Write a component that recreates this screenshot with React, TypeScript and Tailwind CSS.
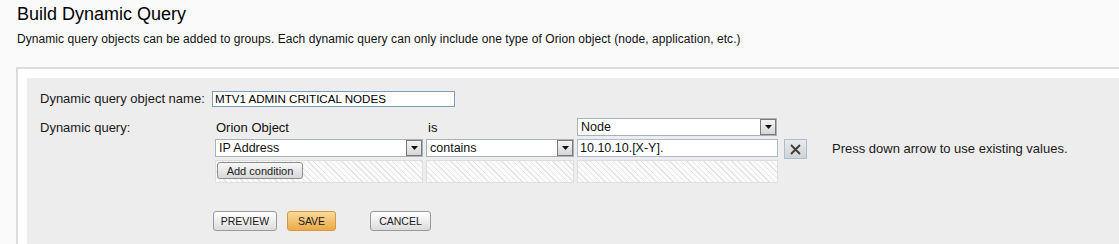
const DropArrow = () => (
  <span className="flex h-full w-[16px] shrink-0 items-center justify-center border border-[#7a7a7a] bg-[linear-gradient(#f4f4f4,#d6d6d6)]">
    <svg width="7" height="4" viewBox="0 0 7 4">
      <path d="M0 0h7L3.5 4z" fill="#111" />
    </svg>
  </span>
);

const Select = ({ value, className }: { value: string; className: string }) => (
  <div className={`flex h-[18px] items-center border border-[#a9b1bd] bg-white pl-[3px] ${className}`}>
    <span className="flex-1 truncate text-[12.5px] leading-[16px] text-[#111]">{value}</span>
    <DropArrow />
  </div>
);

const Hatch = ({ className, children }: { className: string; children?: React.ReactNode }) => (
  <div
    className={`h-[23px] border border-[#dedede] bg-[repeating-linear-gradient(45deg,#fbfbfb_0px,#fbfbfb_3px,#e4e4e4_3px,#e4e4e4_4px)] ${className}`}
  >
    {children}
  </div>
);

const Btn = ({ label, primary, className }: { label: string; primary?: boolean; className: string }) => (
  <button
    className={`flex h-[20px] items-center justify-center rounded-[3px] border text-[10.5px] leading-[12px] text-[#1a1a1a] ${
      primary
        ? 'border-[#d39b3c] bg-[linear-gradient(#fbd99b,#eaaa48)]'
        : 'border-[#9a9a9a] bg-[linear-gradient(#ffffff,#dcdcdc)]'
    } ${className}`}
  >
    {label}
  </button>
);

export default function App() {
  return (
    <div className="h-[244px] w-[1119px] overflow-hidden bg-[#fafafa] font-['Liberation_Sans',Arial,sans-serif] text-[#111]">
      {/* Header */}
      <div className="pl-[17px] pt-[3px]">
        <h1 className="text-[18px] leading-[22px] text-black">Build Dynamic Query</h1>
        <p className="mt-[6px] text-[12px] leading-[16px] tracking-[0.07px] text-[#111]">
          Dynamic query objects can be added to groups. Each dynamic query can only include one type of Orion object (node, application, etc.)
        </p>
      </div>

      {/* Outer frame */}
      <div className="ml-[16px] mt-[20px] h-[200px] border-l-2 border-t-2 border-[#dcdcdc] bg-white pl-[9px] pt-[9px]">
        <div className="h-full bg-[#ededed] pl-[13px] pt-[13px]">
          {/* Name */}
          <div className="flex items-center">
            <span className="w-[172px] text-[13px] leading-[16px] text-[#1a1a1a]">Dynamic query object name:</span>
            <div className="flex h-[16px] w-[243px] items-center border border-[#7f9db9] bg-white pl-[2px] text-[11.6px] leading-[14px] text-black">
              MTV1 ADMIN CRITICAL NODES
            </div>
          </div>

          {/* Query */}
          <div className="mt-[11px] flex">
            <span className="w-[175px] pt-[2px] text-[13px] leading-[16px] text-[#1a1a1a]">Dynamic query:</span>
            <div className="grid grid-cols-[208px_148px_201px_23px_auto] grid-rows-[18px_18px_23px] gap-x-[3px] gap-y-[3px]">
              <span className="pl-[1px] pt-[2px] text-[13px] leading-[16px]">Orion Object</span>
              <span className="pl-[2px] pt-[2px] text-[13px] leading-[16px]">is</span>
              <Select value="Node" className="w-[200px]" />
              <span />
              <span />

              <Select value="IP Address" className="w-[208px]" />
              <Select value="contains" className="w-[148px]" />
              <div className="flex h-[18px] items-center border border-[#a9bcd4] bg-white pl-[2px] text-[12.5px] leading-[16px]">
                10.10.10.[X-Y].
              </div>
              <button className="ml-[3px] flex h-[20px] w-[23px] items-center justify-center border border-[#a9bcd4] bg-[linear-gradient(#eaeaea,#d2d2d2)]">
                <svg width="11" height="11" viewBox="0 0 11 11">
                  <path d="M1 1l9 9M10 1l-9 9" stroke="#3a3a3a" strokeWidth="1.8" />
                </svg>
              </button>
              <span className="ml-[25px] whitespace-nowrap pt-[2px] text-[13px] leading-[16px] text-[#1a1a1a]">
                Press down arrow to use existing values.
              </span>

              <Hatch className="w-[208px] pl-[1px] pt-[1px]">
                <button className="flex h-[17px] w-[86px] items-center justify-center rounded-[3px] border border-[#8c8c8c] bg-[linear-gradient(#f8f8f8,#d8d8d8)] text-[11px] leading-[12px] text-[#222]">
                  Add condition
                </button>
              </Hatch>
              <Hatch className="w-[148px]" />
              <Hatch className="w-[201px]" />
            </div>
          </div>

          {/* Actions */}
          <div className="ml-[173px] mt-[28px] flex">
            <Btn label="PREVIEW" className="w-[64px]" />
            <Btn label="SAVE" primary className="ml-[10px] w-[49px]" />
            <Btn label="CANCEL" className="ml-[34px] w-[61px]" />
          </div>
        </div>
      </div>
    </div>
  );
}
